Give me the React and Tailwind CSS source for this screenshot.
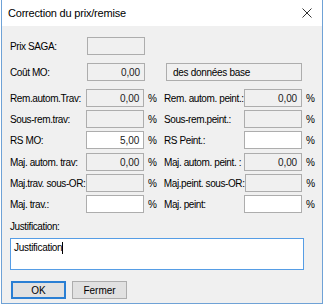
import React from "react";

const font = { fontFamily: '"Liberation Sans", Arial, sans-serif' };

function Field({ value = "", white = false, className = "w-[58px]" }) {
  return (
    <div
      className={`${className} h-[18px] border border-[#adadad] ${
        white ? "bg-white" : "bg-[#f0f0f0]"
      } flex items-center justify-end pr-[4px] text-[10px] tracking-[-0.1px] text-[#222]`}
    >
      {value}
    </div>
  );
}

function Pct() {
  return <span className="w-[20px] pl-[4px] text-[10px]">%</span>;
}

function Label({ children, className = "w-[77px]" }) {
  return (
    <span className={`${className} text-[10px] tracking-[-0.4px] whitespace-nowrap`}>
      {children}
    </span>
  );
}

function Row({ left, lval, lwhite, right, rval, rwhite, className = "" }) {
  return (
    <div className={`flex items-center h-[18px] ${className}`}>
      <Label>{left}</Label>
      <Field value={lval} white={lwhite} />
      <Pct />
      <Label className="w-[81px]">{right}</Label>
      <Field value={rval} white={rwhite} />
      <Pct />
    </div>
  );
}

export default function App() {
  return (
    <div className="w-[325px] h-[306px] bg-white" style={font}>
      <div className="ml-[1px] w-[322px] h-[304px] border-x border-b border-[#6fa2d6] bg-[#f0f0f0] flex flex-col">
        <div className="h-[26px] bg-white flex items-center justify-between pl-[6px] pr-[8px]">
          <span className="text-[11px] tracking-[-0.2px] text-black">Correction du prix/remise</span>
          <svg width="10" height="10" viewBox="0 0 10 10" className="mr-[2px]">
            <path d="M0.5 0.5 L9.5 9.5 M9.5 0.5 L0.5 9.5" stroke="#333" strokeWidth="1" />
          </svg>
        </div>
        <div className="flex flex-col pl-[8px] pt-[11px] text-black">
          <div className="flex items-center h-[18px]">
            <Label>Prix SAGA:</Label>
            <Field />
          </div>
          <div className="flex items-center h-[18px] mt-[8px]">
            <Label>Coût MO:</Label>
            <Field value="0,00" />
            <span className="w-[21px]" />
            <div className="w-[136px] h-[18px] border border-[#adadad] bg-[#f0f0f0] flex items-center pl-[6px] text-[10px] tracking-[-0.3px]">
              des données base
            </div>
          </div>
          <Row className="mt-[8px]" left="Rem.autom.Trav:" lval="0,00" right="Rem. autom. peint.:" rval="0,00" />
          <Row className="mt-[3px]" left="Sous-rem.trav:" right="Sous-rem.peint.:" />
          <Row className="mt-[3px]" left="RS MO:" lval="5,00" lwhite right="RS Peint.:" rwhite />
          <Row className="mt-[4px]" left="Maj. autom. trav:" lval="0,00" right="Maj. autom. peint. :" rval="0,00" />
          <Row className="mt-[3px]" left="Maj.trav. sous-OR:" right="Maj.peint. sous-OR:" />
          <Row className="mt-[3px]" left="Maj. trav.:" lwhite right="Maj. peint:" rwhite />
          <div className="mt-[7px] text-[10px] tracking-[-0.4px] h-[13px] leading-[13px]">Justification:</div>
          <div className="mt-[5px] w-[294px] h-[32px] border border-[#569de5] bg-white pl-[3px] pt-[3px] text-[10px] tracking-[-0.3px] flex items-start">
            <span className="leading-[12px]">Justification</span>
            <span className="w-px h-[12px] bg-black" />
          </div>
          <div className="flex gap-[6px] mt-[11px] ml-[1px]">
            <button className="w-[55px] h-[18px] border-2 border-[#2a7fd4] bg-[#e1e1e1] text-[10px] flex items-center justify-center">
              OK
            </button>
            <button className="w-[55px] h-[18px] border border-[#adadad] bg-[#e1e1e1] text-[10px] flex items-center justify-center">
              Fermer
            </button>
          </div>
        </div>
      </div>
    </div>
  );
}
